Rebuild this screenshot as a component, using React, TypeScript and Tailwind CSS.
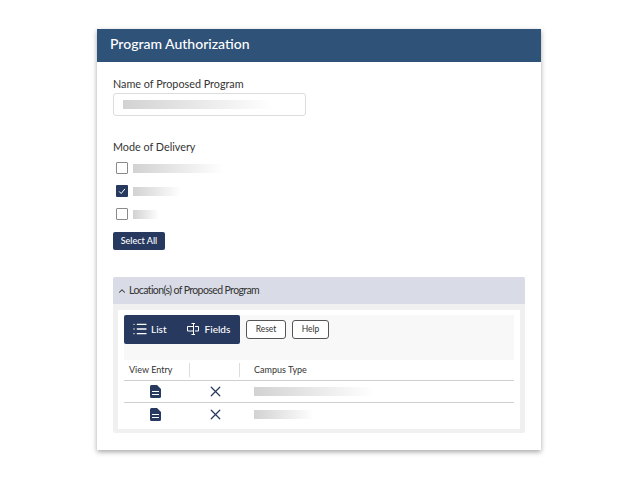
// App.tsx - Program Authorization form card
import { ChevronUp, List, X } from 'lucide-react';

function Blur({ width }: { width: number }) {
  return (
    <div
      className="h-[9px] bg-gradient-to-r from-[#d2d2d2] to-white"
      style={{ width }}
    />
  );
}

function DeliveryRow({ checked, width }: { checked?: boolean; width: number }) {
  return (
    <div className="flex h-[12px] items-center gap-[5px]">
      {checked ? (
        <div className="flex size-[12px] items-center justify-center rounded-[1px] bg-[#28395f]">
          <svg viewBox="0 0 12 12" className="size-[10px]" fill="none" stroke="#fff" strokeWidth="1.2">
            <path d="M2.5 6.5 5 9 9.5 3.5" />
          </svg>
        </div>
      ) : (
        <div className="size-[12px] rounded-[1px] border-[1.500px] border-[#8a8a8a] bg-white" />
      )}
      <Blur width={width} />
    </div>
  );
}

function FieldsIcon() {
  return (
    <svg viewBox="0 0 12 12" className="size-[12px]" fill="none" stroke="#fff" strokeWidth="1">
      <path d="M6 3.500H.5v4.500H6M8 3.500h3.500v4.500H8M4.500.5h3.500M4.500 11.500h3.500M6.500.5v11" />
    </svg>
  );
}

function DocIcon() {
  return (
    <svg viewBox="0 0 11 13" className="h-[13px] w-[11px]">
      <path d="M1.500 0H7l4 4v7.500a1.500 1.500 0 0 1-1.500 1.500h-8A1.500 1.500 0 0 1 0 11.500v-10A1.500 1.500 0 0 1 1.500 0Z" fill="#28395f" />
      <path d="M2 6.500h7M2 9.500h7" stroke="#fff" strokeWidth="1.200" />
    </svg>
  );
}

function EntryRow({ width }: { width: number }) {
  return (
    <div className="flex h-[22px] items-center border-b border-[#cfcfcf] last:border-b-0">
      <div className="flex w-[62px] justify-center">
        <DocIcon />
      </div>
      <div className="flex w-[59px] justify-center">
        <X size={17} strokeWidth={1.700} color="#28395f" />
      </div>
      <div className="pl-[9px]">
        <Blur width={width} />
      </div>
    </div>
  );
}

export default function App() {
  return (
    <div className="h-[479px] w-[638px] bg-white pl-[97px] pt-[29px] font-['Lato',sans-serif] text-[#333]">
      <div className="h-[421px] w-[444px] bg-white shadow-[0_2px_5px_rgba(0,0,0,0.35)]">
        <div className="flex h-[33px] items-center bg-[#2f5278] pb-[5px] pl-[13px] text-[14px] font-medium text-white">
          Program Authorization
        </div>

        <div className="px-[16px] pt-[15px]">
          <div className="text-[10.800px] leading-[14px]">Name of Proposed Program</div>
          <div className="mt-[2px] flex h-[23px] w-[193px] items-center rounded-[3px] border border-[#dcdcdc] pl-[9px]">
            <Blur width={150} />
          </div>

          <div className="mt-[24px] text-[10.800px] leading-[14px]">Mode of Delivery</div>
          <div className="mt-[8px] flex flex-col gap-[11px] pl-[3px]">
            <DeliveryRow width={90} />
            <DeliveryRow checked width={48} />
            <DeliveryRow width={26} />
          </div>
          <button className="mt-[12px] flex h-[18px] w-[52px] items-center justify-center rounded-[2px] bg-[#28395f] text-[9px] font-medium text-white">
            Select All
          </button>

          <div className="mt-[27px] rounded-[2px] bg-[#f0f0f0]">
            <div className="flex h-[27px] items-center gap-[2px] rounded-t-[2px] bg-[#d9dce6] pl-[4px] pt-[1px] text-[10.500px] tracking-[-0.6px]">
              <ChevronUp size={10} strokeWidth={2.500} />
              Location(s) of Proposed Program
            </div>
            <div className="p-[5px] pb-[4px] pt-[6px]">
              <div className="bg-white px-[6px] pb-[4px] pt-[5px]">
                <div className="flex h-[45px] items-start gap-[6px] bg-[#f8f8f8]">
                  <div className="flex h-[29px] w-[116px] items-center rounded-[2px] bg-[#28395f] pl-[8px] pb-[1px] text-[10px] font-medium text-white">
                    <List size={16} strokeWidth={2} color="#fff" />
                    <span className="ml-[3px]">List</span>
                    <span className="ml-[20px]"><FieldsIcon /></span>
                    <span className="ml-[6px]">Fields</span>
                  </div>
                  <button className="mt-[5px] h-[19px] w-[40px] rounded-[3px] border border-[#555] bg-white text-[8.500px]">
                    Reset
                  </button>
                  <button className="mt-[5px] h-[19px] w-[37px] rounded-[3px] border border-[#555] bg-white text-[8.500px]">
                    Help
                  </button>
                </div>
                <div className="flex h-[21px] items-center border-b border-[#cfcfcf] text-[9px]">
                  <div className="h-[14px] w-[66px] border-r border-[#dcdcdc] pl-[5px] leading-[14px]">View Entry</div>
                  <div className="h-[14px] w-[50px] border-r border-[#dcdcdc]" />
                  <div className="pl-[14px]">Campus Type</div>
                </div>
                <EntryRow width={120} />
                <EntryRow width={60} />
              </div>
            </div>
          </div>
        </div>
      </div>
    </div>
  );
}
